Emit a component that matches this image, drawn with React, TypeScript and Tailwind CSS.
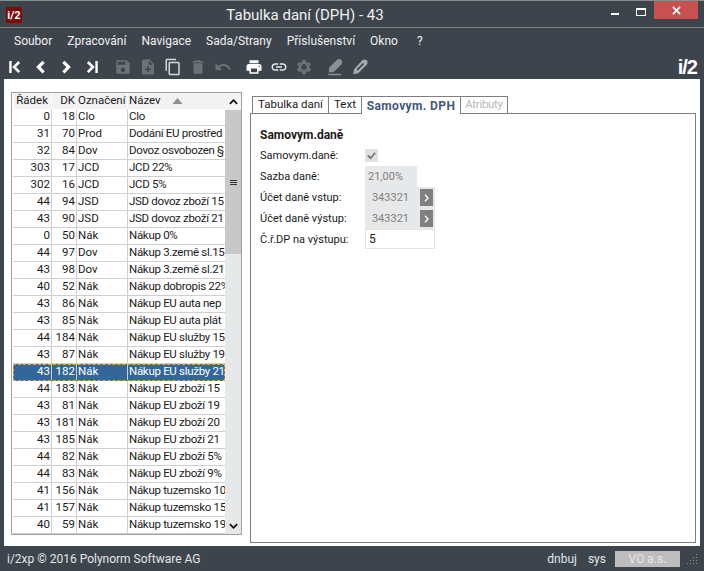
import type { ReactNode } from 'react'

const rows: [string, string, string, string][] = [
  ['0', '18', 'Clo', 'Clo'],
  ['31', '70', 'Prod', 'Dodání EU prostřed'],
  ['32', '84', 'Dov', 'Dovoz osvobozen §'],
  ['303', '17', 'JCD', 'JCD 22%'],
  ['302', '16', 'JCD', 'JCD 5%'],
  ['44', '94', 'JSD', 'JSD dovoz zboží 15'],
  ['43', '90', 'JSD', 'JSD dovoz zboží 21'],
  ['0', '50', 'Nák', 'Nákup 0%'],
  ['44', '97', 'Dov', 'Nákup 3.země sl.15'],
  ['43', '98', 'Dov', 'Nákup 3.země sl.21'],
  ['40', '52', 'Nák', 'Nákup dobropis 22%'],
  ['43', '86', 'Nák', 'Nákup EU auta nep'],
  ['43', '85', 'Nák', 'Nákup EU auta plát'],
  ['44', '184', 'Nák', 'Nákup EU služby 15'],
  ['43', '87', 'Nák', 'Nákup EU služby 19'],
  ['43', '182', 'Nák', 'Nákup EU služby 21'],
  ['44', '183', 'Nák', 'Nákup EU zboží 15'],
  ['43', '81', 'Nák', 'Nákup EU zboží 19'],
  ['43', '181', 'Nák', 'Nákup EU zboží 20'],
  ['43', '185', 'Nák', 'Nákup EU zboží 21'],
  ['44', '82', 'Nák', 'Nákup EU zboží 5%'],
  ['44', '83', 'Nák', 'Nákup EU zboží 9%'],
  ['41', '156', 'Nák', 'Nákup tuzemsko 10'],
  ['41', '157', 'Nák', 'Nákup tuzemsko 15'],
  ['40', '59', 'Nák', 'Nákup tuzemsko 19'],
]

const paths = {
  first: 'M17.5 6.5L15 4l-8 8 8 8 2.5-2.5L12 12zM3 4h3.2v16H3z',
  prev: 'M17 6.5L14 3.5 5.5 12l8.5 8.5 3-3L11.5 12z',
  next: 'M7 6.5L10 3.5l8.5 8.5L10 20.5 7 17.5 12.5 12z',
  last: 'M6.5 6.5L9 4l8 8-8 8-2.5-2.5L12 12zM17.8 4H21v16h-3.2z',
  save: 'M17 3H5c-1.11 0-2 .9-2 2v14c0 1.1.89 2 2 2h14c1.1 0 2-.9 2-2V7l-4-4zm-5 16c-1.66 0-3-1.34-3-3s1.34-3 3-3 3 1.34 3 3-1.34 3-3 3zm3-10H5V5h10v4z',
  add: 'M14 2H6c-1.1 0-1.99.9-1.99 2L4 20c0 1.1.89 2 1.99 2H18c1.1 0 2-.9 2-2V8l-6-6zm2 14h-3v3h-2v-3H8v-2h3v-3h2v3h3v2zm-3-7V3.5L18.5 9H13z',
  copy: 'M16 1H4c-1.1 0-2 .9-2 2v14h2V3h12V1zm3 4H8c-1.1 0-2 .9-2 2v14c0 1.1.9 2 2 2h11c1.1 0 2-.9 2-2V7c0-1.1-.9-2-2-2zm0 16H8V7h11v14z',
  trash: 'M6 19c0 1.1.9 2 2 2h8c1.1 0 2-.9 2-2V7H6v12zM19 4h-3.5l-1-1h-5l-1 1H5v2h14V4z',
  undo: 'M12.5 8c-2.65 0-5.05.99-6.9 2.6L2 7v9h9l-3.62-3.62c1.39-1.16 3.16-1.88 5.12-1.88 3.54 0 6.55 2.31 7.6 5.5l2.37-.78C21.08 11.03 17.15 8 12.5 8z',
  print: 'M19 8H5c-1.66 0-3 1.34-3 3v6h4v4h12v-4h4v-6c0-1.66-1.34-3-3-3zm-3 11H8v-5h8v5zm3-7c-.55 0-1-.45-1-1s.45-1 1-1 1 .45 1 1-.45 1-1 1zm-1-9H6v4h12V3z',
  link: 'M3.9 12c0-1.71 1.39-3.1 3.1-3.1h4V7H7c-2.76 0-5 2.24-5 5s2.24 5 5 5h4v-1.9H7c-1.71 0-3.1-1.39-3.1-3.1zM8 13h8v-2H8v2zm9-6h-4v1.9h4c1.71 0 3.1 1.39 3.1 3.1s-1.39 3.1-3.1 3.1h-4V17h4c2.76 0 5-2.24 5-5s-2.24-5-5-5z',
  gear: 'M19.14 12.94c.04-.3.06-.61.06-.94 0-.32-.02-.64-.07-.94l2.03-1.58c.18-.14.23-.41.12-.61l-1.92-3.32c-.12-.22-.37-.29-.59-.22l-2.39.96c-.5-.38-1.03-.7-1.62-.94l-.36-2.54c-.04-.24-.24-.41-.48-.41h-3.84c-.24 0-.43.17-.47.41l-.36 2.54c-.59.24-1.13.57-1.62.94l-2.39-.96c-.22-.08-.47 0-.59.22L2.74 8.87c-.12.21-.08.47.12.61l2.03 1.58c-.05.3-.09.63-.09.94s.02.64.07.94l-2.03 1.58c-.18.14-.23.41-.12.61l1.92 3.32c.12.22.37.29.59.22l2.39-.96c.5.38 1.03.7 1.62.94l.36 2.54c.05.24.24.41.48.41h3.84c.24 0 .44-.17.47-.41l.36-2.54c.59-.24 1.13-.56 1.62-.94l2.39.96c.22.08.47 0 .59-.22l1.92-3.32c.12-.22.07-.47-.12-.61l-2.01-1.58zM12 15.6c-1.98 0-3.6-1.62-3.6-3.6s1.62-3.6 3.6-3.6 3.6 1.62 3.6 3.6-1.62 3.6-3.6 3.6z',
  pen: 'M14.5 2.5c1.5-1.5 4.5-1.5 6 0s1.5 4.5 0 6L10 19H4v-6zM3 21h17v2H3z',
  pen2: 'M15 3c1.5-1.5 4.5-1.5 6 0s1.5 4.5 0 6L10 20l-7 2 1-7zM16 6.5L7.500 15 9 16.500 17.500 8z',
}

function Icon({ d, className, size = 18 }: { d: string; className: string; size?: number }) {
  return (
    <svg viewBox="0 0 24 24" width={size} height={size} className={className} fill="currentColor" fillRule="evenodd">
      <path d={d} />
    </svg>
  )
}

function TitleBar() {
  return (
    <div className="relative flex h-[27px] shrink-0 items-center justify-center border-b border-[#7d8084] pr-[94px]">
      <div className="absolute left-[6px] top-[6px] flex h-[16px] w-[16px] items-center justify-center bg-[#7a0c0c] text-[11px] font-bold leading-none text-white">
        i/2
      </div>
      <span className="mt-[3px] text-[15px] text-[#eef0f2]">Tabulka daní (DPH) - 43</span>
      <div className="absolute right-[6px] top-0 flex items-start">
        <div className="mr-[17px] mt-[12px] h-[2px] w-[8px] bg-white" />
        <div className="mr-[8px] mt-[7px] h-[8px] w-[10px] border border-t-2 border-white" />
        <div className="flex h-[18px] w-[44px] items-center justify-center bg-[#c75050] text-white">
          <svg viewBox="0 0 10 10" width="9" height="9" stroke="currentColor" strokeWidth="1.8">
            <path d="M1 1l8 8M9 1l-8 8" />
          </svg>
        </div>
      </div>
    </div>
  )
}

function MenuBar() {
  const items = ['Soubor', 'Zpracování', 'Navigace', 'Sada/Strany', 'Příslušenství', 'Okno', '?']
  return (
    <div className="flex h-[26px] shrink-0 items-center gap-[15px] pl-[14px] text-[12px] text-[#eef0f2]">
      {items.map((m) => (
        <span key={m} className={m === '?' ? 'ml-[4px]' : ''}>{m}</span>
      ))}
    </div>
  )
}

function Toolbar() {
  const white = 'text-white'
  const dim = 'text-[#6d7277]'
  return (
    <div className="flex h-[25px] shrink-0 items-center pl-[7px] pr-[7px]">
      <div className="flex items-center gap-[7px]">
        <Icon d={paths.first} className={white} />
        <Icon d={paths.prev} className={white} />
        <Icon d={paths.next} className={white} />
        <Icon d={paths.last} className={white} />
      </div>
      <div className="ml-[14px] flex items-center gap-[7px]">
        <Icon d={paths.save} className={dim} />
        <Icon d={paths.add} className={dim} />
        <Icon d={paths.copy} className="text-[#d5d7d9]" />
        <Icon d={paths.trash} className={dim} />
        <Icon d={paths.undo} className={dim} />
      </div>
      <div className="ml-[13px] flex items-center gap-[7px]">
        <Icon d={paths.print} className={white} />
        <Icon d={paths.link} className="text-[#e6e8ea]" />
        <Icon d={paths.gear} className={dim} />
      </div>
      <div className="ml-[13px] flex items-center gap-[7px]">
        <Icon d={paths.pen} className="text-[#8d9195]" />
        <Icon d={paths.pen2} className="text-[#a6a9ac]" />
      </div>
      <span className="ml-auto font-['Liberation_Sans',sans-serif] text-[20px] font-bold leading-none tracking-[-1px] text-white">i/2</span>
    </div>
  )
}

function Cell({ w, right, children }: { w: string; right?: boolean; children: ReactNode }) {
  return (
    <div
      className={`${w} ${right ? 'justify-end pr-[1px]' : 'pl-[1px]'} flex shrink-0 items-center overflow-hidden whitespace-nowrap border-r border-[#cfcfcf]`}
    >
      {children}
    </div>
  )
}

function Grid() {
  return (
    <div className="flex h-[443px] w-[231px] shrink-0 border border-[#a0a0a0] text-[11.5px] leading-none text-[#1a1a1a]">
      <div className="w-[213px] shrink-0 overflow-hidden pl-[1px]">
        <div className="flex h-[16px] items-center bg-[#f2f2f2]">
          <div className="flex h-full w-[39px] items-center justify-end border-r border-white pr-[3px]">Řádek</div>
          <div className="flex h-full w-[25px] items-center justify-end border-r border-white pr-[1px]">DK</div>
          <div className="flex h-full w-[51px] items-center border-r border-white pl-[1px]">Označení</div>
          <div className="flex h-full flex-1 items-center pl-[1px]">
            Název
            <svg viewBox="0 0 10 6" width="11" height="6" className="ml-[11px] text-[#909090]" fill="currentColor">
              <path d="M5 0l5 6H0z" />
            </svg>
          </div>
        </div>
        {rows.map((r, i) => {
          const selected = r[1] === '182'
          return (
            <div
              key={r[1] + i}
              className={`flex h-[17px] border-b ${
                selected
                  ? 'border-transparent bg-[#336699] text-white outline-1 -outline-offset-1 outline-dashed outline-[#e8a050]'
                  : 'border-[#cfcfcf]'
              }`}
            >
              <Cell w="w-[39px]" right>{r[0]}</Cell>
              <Cell w="w-[25px]" right>{r[1]}</Cell>
              <Cell w="w-[51px]">{r[2]}</Cell>
              <div className="flex w-[97px] items-center overflow-hidden whitespace-nowrap pl-[1px] tracking-[-0.3px]">{r[3]}</div>
            </div>
          )
        })}
      </div>
      <div className="flex flex-1 flex-col bg-[#e6e8ea]">
        <div className="flex h-[17px] items-center justify-center bg-[#f4f4f4]">
          <svg viewBox="0 0 10 6" width="9" height="6" fill="none" stroke="#111" strokeWidth="2">
            <path d="M1 5l4-4 4 4" />
          </svg>
        </div>
        <div className="flex h-[144px] items-center justify-center bg-[#c8c8c8]">
          <div className="flex flex-col gap-[1px]">
            <div className="h-[1px] w-[7px] bg-[#333]" />
            <div className="h-[1px] w-[7px] bg-[#333]" />
            <div className="h-[1px] w-[7px] bg-[#333]" />
          </div>
        </div>
        <div className="flex-1" />
        <div className="flex h-[17px] items-center justify-center">
          <svg viewBox="0 0 10 6" width="9" height="6" fill="none" stroke="#111" strokeWidth="2">
            <path d="M1 1l4 4 4-4" />
          </svg>
        </div>
      </div>
    </div>
  )
}

function Tab({ w, children, className }: { w: string; children: ReactNode; className?: string }) {
  return (
    <div className={`${w} ${className ?? ''} flex h-[17px] items-center justify-center border border-b-0 border-[#7f7f7f]`}>
      {children}
    </div>
  )
}

function ArrowButton() {
  return (
    <div className="ml-[11px] flex h-[17px] w-[13px] items-center justify-center bg-[#808080]">
      <svg viewBox="0 0 6 10" width="5" height="8" fill="none" stroke="#fff" strokeWidth="1.6">
        <path d="M1 1l4 4-4 4" />
      </svg>
    </div>
  )
}

function Detail() {
  return (
    <div className="flex h-[451px] w-[446px] shrink-0 flex-col pt-[4px] text-[11px] leading-none">
      <div className="z-10 -mb-px flex pl-[2px] text-[11.5px] text-[#1a1a1a]">
        <Tab w="w-[77px]">Tabulka daní</Tab>
        <Tab w="w-[34px]" className="-ml-px">Text</Tab>
        <Tab w="w-[100px]" className="-ml-px h-[18px] bg-white text-[12px] font-bold tracking-[0.4px] text-[#44577a]">
          Samovym. DPH
        </Tab>
        <Tab w="w-[48px]" className="-ml-px tracking-[-0.3px] text-[#b8b8b8]">Atributy</Tab>
      </div>
      <div className="flex-1 border border-[#7f7f7f] pl-[9px] pt-[15px] text-[#1a1a1a]">
        <div className="mb-[4px] text-[12px] font-bold">Samovym.daně</div>
        <div className="flex h-[21px] items-center">
          <span className="w-[105px]">Samovym.daně:</span>
          <div className="flex h-[13px] w-[13px] items-center justify-center bg-[#dfe2e5] text-[#777]">
            <svg viewBox="0 0 12 12" width="11" height="11" fill="none" stroke="currentColor" strokeWidth="2">
              <path d="M2 6l3 3 5-6" />
            </svg>
          </div>
        </div>
        <div className="flex h-[21px] items-center">
          <span className="w-[105px]">Sazba daně:</span>
          <div className="flex h-full w-[52px] items-center bg-[#e6e8ea] pl-[3px] text-[#808080]">21,00%</div>
        </div>
        <div className="flex h-[21px] items-center">
          <span className="w-[105px]">Účet daně vstup:</span>
          <div className="flex h-full w-[70px] items-center justify-end bg-[#e6e8ea] pr-[2px] text-[#808080]">
            343321<ArrowButton />
          </div>
        </div>
        <div className="flex h-[21px] items-center">
          <span className="w-[105px]">Účet daně výstup:</span>
          <div className="flex h-full w-[70px] items-center justify-end bg-[#e6e8ea] pr-[2px] text-[#808080]">
            343321<ArrowButton />
          </div>
        </div>
        <div className="flex h-[20px] items-center">
          <span className="w-[105px]">Č.ř.DP na výstupu:</span>
          <div className="flex h-full w-[70px] items-center border border-[#e3e3e3] pl-[3px] text-[12px]">5</div>
        </div>
      </div>
    </div>
  )
}

export default function App() {
  return (
    <div
      className="flex h-[571px] w-[704px] flex-col overflow-hidden border-t border-[#8a8c8f] bg-[#3e444c]"
      style={{ fontFamily: 'Roboto, sans-serif' }}
    >
      <TitleBar />
      <MenuBar />
      <Toolbar />
      <div className="mx-[4px] flex h-[467px] shrink-0 items-start gap-[8px] bg-white pl-[7px] pt-[13px]">
        <Grid />
        <Detail />
      </div>
      <div className="flex flex-1 items-center pl-[7px] pr-[6px] text-[12px] text-[#e4e6e8]">
        <span>i/2xp © 2016 Polynorm Software AG</span>
        <span className="ml-auto text-[#dce6f0]">dnbuj</span>
        <span className="ml-[11px]">sys</span>
        <div className="ml-[9px] flex h-[16px] w-[65px] items-center justify-center bg-[#bdbdbd] text-[#e8e8e8]">VO a.s.</div>
        <svg viewBox="0 0 11 11" width="11" height="11" className="ml-[7px] text-[#8a8c8f]" fill="currentColor">
          <path d="M9 1h1v1H9zM9 4h1v1H9zM6 4h1v1H6zM9 7h1v1H9zM6 7h1v1H6zM3 7h1v1H3zM9 10h1v1H9zM6 10h1v1H6zM3 10h1v1H3zM0 10h1v1H0z" />
        </svg>
      </div>
    </div>
  )
}
